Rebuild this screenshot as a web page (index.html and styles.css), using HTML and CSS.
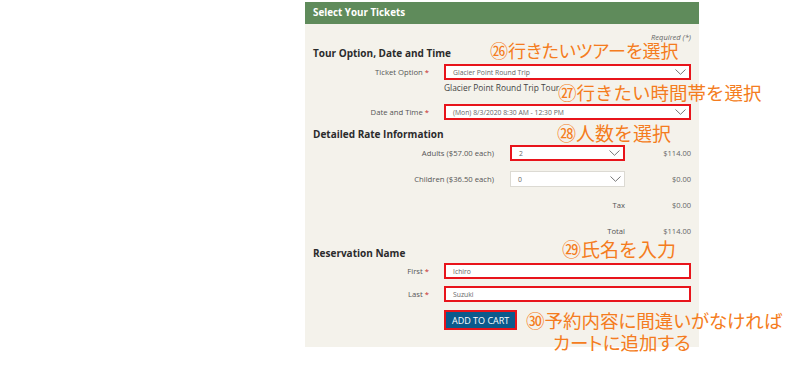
FILE: index.html
```html
<!DOCTYPE html>
<html>
<head>
    <meta charset="UTF-8">
    <link rel="stylesheet" href="styles.css">
</head>
<body>
<div class="page">
    <div class="panel">
        <div class="panel-head">Select Your Tickets</div>
        <div class="panel-body">
            <div class="required">Required (*)</div>

            <!-- ツアー・日時 -->
            <h2 class="section">Tour Option, Date and Time</h2>
            <div class="field-row">
                <div class="label">Ticket Option <span class="star">*</span></div>
                <div class="select marked">
                    <span>Glacier Point Round Trip</span>
                    <svg class="chev" width="11" height="6" viewBox="0 0 11 6"><path d="M0.5 0.5 L5.5 5.3 L10.5 0.5" fill="none" stroke="#777" stroke-width="1"/></svg>
                </div>
            </div>
            <div class="field-note">Glacier Point Round Trip Tour</div>
            <div class="field-row">
                <div class="label">Date and Time <span class="star">*</span></div>
                <div class="select marked">
                    <span>(Mon) 8/3/2020 8:30 AM - 12:30 PM</span>
                    <svg class="chev" width="11" height="6" viewBox="0 0 11 6"><path d="M0.5 0.5 L5.5 5.3 L10.5 0.5" fill="none" stroke="#777" stroke-width="1"/></svg>
                </div>
            </div>

            <!-- 料金 -->
            <h2 class="section rate-head">Detailed Rate Information</h2>
            <div class="rate-row">
                <div class="label">Adults ($57.00 each)</div>
                <div class="select marked">
                    <span>2</span>
                    <svg class="chev" width="11" height="6" viewBox="0 0 11 6"><path d="M0.5 0.5 L5.5 5.3 L10.5 0.5" fill="none" stroke="#777" stroke-width="1"/></svg>
                </div>
                <div class="price">$114.00</div>
            </div>
            <div class="rate-row">
                <div class="label">Children ($36.50 each)</div>
                <div class="select">
                    <span>0</span>
                    <svg class="chev" width="11" height="6" viewBox="0 0 11 6"><path d="M0.5 0.5 L5.5 5.3 L10.5 0.5" fill="none" stroke="#777" stroke-width="1"/></svg>
                </div>
                <div class="price">$0.00</div>
            </div>
            <div class="rate-row">
                <div></div>
                <div class="label">Tax</div>
                <div class="price">$0.00</div>
            </div>
            <div class="rate-row">
                <div></div>
                <div class="label">Total</div>
                <div class="price">$114.00</div>
            </div>

            <!-- 予約者名 -->
            <h2 class="section name-head">Reservation Name</h2>
            <div class="field-row">
                <div class="label">First <span class="star">*</span></div>
                <div class="text-input marked">Ichiro</div>
            </div>
            <div class="field-row last-row">
                <div class="label">Last <span class="star">*</span></div>
                <div class="text-input marked">Suzuki</div>
            </div>
            <div class="field-row button-row">
                <div></div>
                <div><button class="cart-btn">ADD TO CART</button></div>
            </div>
        </div>
    </div>

    <!-- 注釈 -->
    <div class="note note-26">㉖行きたいツアーを選択</div>
    <div class="note note-27">㉗行きたい時間帯を選択</div>
    <div class="note note-28">㉘人数を選択</div>
    <div class="note note-29">㉙氏名を入力</div>
    <div class="note note-30">㉚予約内容に間違いがなければ<br><span class="indent">カートに追加する</span></div>
</div>
</body>
</html>
```

FILE: styles.css
```css
body {
    margin: 0;
    background: #ffffff;
    font-family: 'Open Sans', 'Liberation Sans', sans-serif;
    color: #555;
}
.page {
    position: relative;
    width: 800px;
    height: 370px;
    padding-top: 2px;
    box-sizing: border-box;
}
.panel {
    margin-left: 305px;
    width: 394px;
    background: #f4f2eb;
}
.panel-head {
    height: 22px;
    line-height: 22px;
    padding: 0 8px;
    background: #5f8b5b;
    color: #fff;
    font-size: 9.8px;
    font-weight: bold;
}
.panel-body {
    padding: 8px 8px 17px;
}
.required {
    text-align: right;
    font-size: 7.5px;
    font-style: italic;
    line-height: 10px;
    color: #666;
}
.section {
    margin: 4px 0 4px;
    font-size: 10px;
    line-height: 14px;
    font-weight: bold;
    color: #2b2b2b;
}
.rate-head {
    margin: 7px 0 -1px;
}
.name-head {
    margin: 2px 0 3px;
}
.field-row {
    display: grid;
    grid-template-columns: 116px 247px;
    column-gap: 15px;
    align-items: center;
    height: 16px;
}
.last-row {
    margin-top: 7px;
}
.button-row {
    margin-top: 8px;
    height: 20px;
}
.label {
    text-align: right;
    font-size: 7.7px;
    color: #555;
    white-space: nowrap;
}
.star {
    color: #c62828;
}
.field-note {
    margin: 2px 0 10px 131px;
    font-size: 8.4px;
    line-height: 12px;
    color: #444;
}
.select,
.text-input {
    height: 16px;
    box-sizing: border-box;
    background: #fff;
    border: 1px solid #dcdad3;
    display: flex;
    align-items: center;
    justify-content: space-between;
    padding: 0 3px 0 7px;
    font-size: 6.8px;
    color: #666;
}
.marked {
    border: 2px solid #e8141b;
}
.chev {
    display: block;
    flex-shrink: 0;
}
.rate-row {
    display: grid;
    grid-template-columns: 181px 16px 115px 66px;
    align-items: center;
    height: 26px;
}
.rate-row > :first-child {
    grid-column: 1 / 3;
    padding-right: 16px;
}
.price {
    text-align: right;
    font-size: 7.5px;
    color: #666;
}
.cart-btn {
    height: 20px;
    padding: 0 6px;
    background: #0b5a8c;
    border: 2px solid #e8141b;
    color: #fff;
    font-family: 'Open Sans', 'Liberation Sans', sans-serif;
    font-size: 9px;
    display: block;
}
.note {
    position: absolute;
    color: #f47c20;
    font-family: 'Noto Sans CJK JP', sans-serif;
    font-size: 19px;
    line-height: 22px;
    white-space: nowrap;
}
.note-26 { left: 490px; top: 39px; font-size: 18px; font-feature-settings: "palt"; }
.note-27 { left: 558px; top: 81px; font-size: 18.5px; }
.note-28 { left: 557px; top: 122px; }
.note-29 { left: 562px; top: 238px; }
.note-30 {
    left: 526px;
    top: 309px;
    font-size: 18.5px;
    font-feature-settings: "palt";
}
.note-30 .indent {
    padding-left: 27px;
}
```
